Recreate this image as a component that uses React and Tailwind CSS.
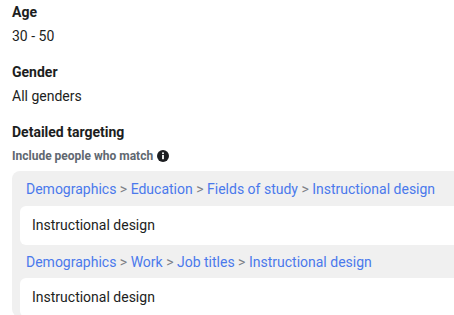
import React from "react";

const Crumbs = ({ items, h }) => (
  <div className={`pl-[14px] flex items-center text-[14px] leading-5 whitespace-pre ${h}`}>
    {items.map((item, i) => (
      <React.Fragment key={item}>
        {i > 0 && <span className="text-[#7d8187]"> &gt; </span>}
        <span className="text-[#4a79ec]">{item}</span>
      </React.Fragment>
    ))}
  </div>
);

const Chip = ({ label }) => (
  <div className="ml-2 h-[39px] bg-white rounded-l-md flex items-center pl-3 text-[14px] text-[#1c1e21]">
    {label}
  </div>
);

export default function App() {
  return (
    <div
      className="w-[454px] h-[315px] overflow-hidden bg-white"
      style={{ fontFamily: "Roboto, 'Liberation Sans', sans-serif" }}
    >
      <div className="pl-3">
        <div className="leading-6 text-[14px]">
          <p className="font-bold text-[#1c1e21]">Age</p>
          <p className="text-[#1c1e21]">30 - 50</p>
        </div>
        <div className="leading-6 text-[14px] mt-3">
          <p className="font-bold text-[#1c1e21]">Gender</p>
          <p className="text-[#1c1e21]">All genders</p>
        </div>
        <div className="mt-3">
          <p className="font-bold text-[14px] leading-6 text-[#1c1e21]">
            Detailed targeting
          </p>
          <div className="flex items-center gap-1 text-[12px] font-bold text-[#606770] leading-6">
            <span>Include people who match</span>
            <svg width="12" height="12" viewBox="0 0 12 12">
              <circle cx="6" cy="6" r="6" fill="#1c1e21" />
              <circle cx="6" cy="3.3" r="1" fill="#fff" />
              <rect x="5.1" y="5" width="1.8" height="4.2" fill="#fff" />
            </svg>
          </div>
        </div>
        <div className="mt-[3px] w-[470px] bg-[#f0f0f0] rounded-lg">
          <Crumbs
            h="h-[35px]"
            items={[
              "Demographics",
              "Education",
              "Fields of study",
              "Instructional design",
            ]}
          />
          <Chip label="Instructional design" />
          <Crumbs
            h="h-[33px]"
            items={["Demographics", "Work", "Job titles", "Instructional design"]}
          />
          <Chip label="Instructional design" />
        </div>
      </div>
    </div>
  );
}
